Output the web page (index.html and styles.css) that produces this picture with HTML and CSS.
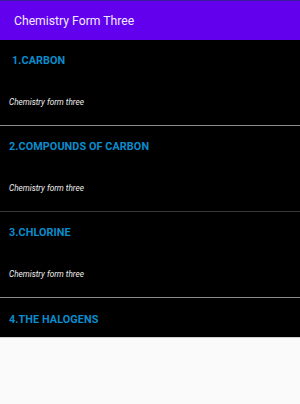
FILE: index.html
```html
<!DOCTYPE html>
<html>
<head>
<meta charset="utf-8">
<link rel="stylesheet" href="styles.css">
</head>
<body>
<header class="appbar">
  <h1 class="appbar-title">Chemistry Form Three</h1>
</header>
<ul class="list">
  <li class="item item-first">
    <div class="item-title">1.CARBON</div>
    <div class="item-sub">Chemistry form three</div>
  </li>
  <li class="item item-dark">
    <div class="item-title">2.COMPOUNDS OF CARBON</div>
    <div class="item-sub">Chemistry form three</div>
  </li>
  <li class="item">
    <div class="item-title">3.CHLORINE</div>
    <div class="item-sub">Chemistry form three</div>
  </li>
  <li class="item item-last">
    <div class="item-title">4.THE HALOGENS</div>
  </li>
</ul>
</body>
</html>
```
FILE: styles.css
```css
html, body {
  margin: 0;
  padding: 0;
}
body {
  background: #fafafa;
  font-family: Roboto, "Liberation Sans", sans-serif;
  width: 300px;
  height: 404px;
  overflow: hidden;
}
.appbar {
  height: 39px;
  background: #6200ee;
  border-top: 1px solid #3a1a9a;
  display: flex;
  align-items: center;
  padding-left: 14px;
  box-sizing: content-box;
}
.appbar-title {
  margin: 0;
  font-size: 12.2px;
  font-weight: 400;
  color: #f1eaff;
}
.list {
  list-style: none;
  margin: 0;
  padding: 0;
  background: #000;
}
.item {
  box-sizing: border-box;
  padding: 14px 0 0 9px;
  border-bottom: 1px solid #8c8c8c;
  display: flex;
  flex-direction: column;
  height: 86px;
}
.item-dark {
  border-bottom-color: #383838;
}
.item-first {
  padding-left: 12px;
}
.item-first .item-sub {
  margin-left: -3px;
}
.item-title {
  font-size: 10.8px;
  font-weight: 700;
  color: #0a8ccc;
  line-height: 14px;
  letter-spacing: 0.1px;
}
.item-sub {
  margin-top: 29px;
  font-size: 8.2px;
  font-style: italic;
  color: #f0f0f0;
  line-height: 10px;
}
.item-last {
  height: 40px;
  padding-top: 15px;
  border-bottom: 1px solid #d0d0d0;
}
```
